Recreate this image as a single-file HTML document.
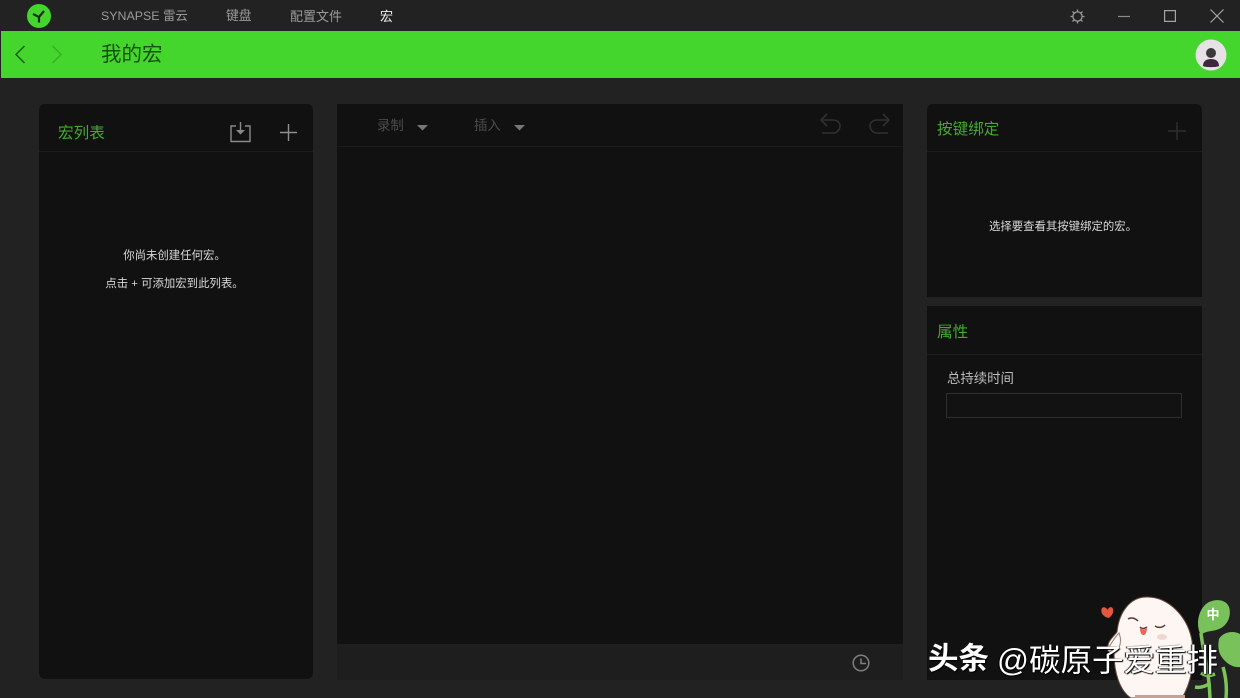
<!DOCTYPE html>
<html lang="zh"><head><meta charset="utf-8"><style>
*{box-sizing:border-box}
html,body{margin:0;padding:0;width:1240px;height:698px;overflow:hidden;background:#222}
body{position:relative;font-family:"Liberation Sans","Noto Sans CJK SC",sans-serif}
.a{position:absolute;white-space:nowrap;line-height:1}
.p{position:absolute;background:#111}
.h{color:#45a82f}
.w{color:#d8d8d8;font-size:11.400px}
svg{position:absolute;overflow:visible}
</style></head><body>
<div class="a" style="left:0;top:0;width:1240px;height:31px;background:#222"></div>
<div class="a" style="left:1px;top:31px;width:1239px;height:47px;background:#44d62c"></div>
<svg style="left:26px;top:3px" width="26" height="26" viewBox="0 0 26 26"><circle cx="13" cy="13" r="12" fill="#44d62c"/><path d="M13 14V19.500M13 14L7 11M13 14L18 8" stroke="#1b2a18" stroke-width="2.200" fill="none"/></svg>
<div class="a" style="left:101px;top:10px;font-size:12.400px;color:#9a9a9a">SYNAPSE 雷云</div>
<div class="a" style="left:226px;top:10px;font-size:12.800px;color:#9a9a9a">键盘</div>
<div class="a" style="left:290px;top:10px;font-size:13px;color:#9a9a9a">配置文件</div>
<div class="a" style="left:380px;top:10px;font-size:13px;color:#eee">宏</div>
<svg style="left:1070px;top:9px" width="15" height="15" viewBox="0 0 15 15" fill="none" stroke="#999" stroke-width="1.300"><circle cx="7.500" cy="7.500" r="4.600"/><path d="M7.500 0.500v2.400M7.500 12.100v2.400M.5 7.500h2.400M12.100 7.500h2.400M2.500 2.500l1.700 1.700M10.800 10.800l1.700 1.700M12.500 2.500l-1.700 1.700M4.200 10.800l-1.700 1.700"/></svg>
<svg style="left:1118px;top:15px" width="12" height="3"><path d="M0 1.500h12" stroke="#8a8a8a" stroke-width="1.200"/></svg>
<svg style="left:1164px;top:10px" width="12" height="12" fill="none"><rect x=".6" y=".6" width="10.800" height="10.800" stroke="#a5a5a5" stroke-width="1.200"/></svg>
<svg style="left:1210px;top:9px" width="14" height="14" fill="none"><path d="M.5.5l13 13M13.500.5l-13 13" stroke="#aaa" stroke-width="1.100"/></svg>
<svg style="left:14px;top:45px" width="12" height="19" fill="none"><path d="M10.500 1L2 9.500 10.500 18" stroke="#1b6012" stroke-width="1.500"/></svg>
<svg style="left:51px;top:45px" width="12" height="19" fill="none"><path d="M1.500 1L10 9.500 1.500 18" stroke="#39b025" stroke-width="1.500"/></svg>
<div class="a" style="left:101px;top:45px;font-size:20.500px;color:#16500e">我的宏</div>
<svg style="left:1195px;top:39px" width="32" height="32" viewBox="0 0 32 32"><circle cx="16" cy="16" r="15.500" fill="#e6e2e6"/><circle cx="16" cy="14" r="5" fill="#3a3a3a"/><path d="M8 27c0-5 3.500-7 8-7s8 2 8 7c-2 1.500-14 1.500-16 0z" fill="#3a2a3a"/></svg>

<div class="p" style="left:39px;top:104px;width:274px;height:575px;border-radius:6px"></div>
<div class="a" style="left:39px;top:151px;width:274px;height:1px;background:#1c1c1c"></div>
<div class="a h" style="left:58px;top:126px;font-size:15.600px">宏列表</div>
<svg style="left:230px;top:121px" width="21" height="22" fill="none" stroke="#8a8a8a" stroke-width="1.400"><path d="M6 5H1v15.500h19V5h-5"/><path d="M10.500 1v11" /><path d="M6 9l4.500 4.500L15 9z" fill="#8a8a8a" stroke="none"/></svg>
<svg style="left:279px;top:123px" width="19" height="19"><path d="M9.500 1v17M1 9.500h17" stroke="#8f8f8f" stroke-width="1.400"/></svg>
<div class="a w" style="left:39px;top:251px;width:271px;text-align:center">你尚未创建任何宏。</div>
<div class="a w" style="left:39px;top:279px;width:271px;text-align:center">点击 + 可添加宏到此列表。</div>

<div class="p" style="left:337px;top:104px;width:566px;height:540px"></div>
<div class="a" style="left:337px;top:146px;width:566px;height:1px;background:#1b1b1b"></div>
<div class="a" style="left:337px;top:644px;width:566px;height:36px;background:#1e1e1e"></div>
<div class="a" style="left:377px;top:119px;font-size:13.400px;color:#4c4c4c">录制</div>
<div class="a" style="left:474px;top:119px;font-size:13.400px;color:#4c4c4c">插入</div>
<svg style="left:416px;top:124px" width="13" height="7"><path d="M1 1h11L6.500 6.500z" fill="#777"/></svg>
<svg style="left:513px;top:124px" width="13" height="7"><path d="M1 1h11L6.500 6.500z" fill="#777"/></svg>
<svg style="left:819px;top:113px" width="23" height="22" fill="none" stroke="#303030" stroke-width="1.600"><path d="M8 1L2 7l6 6M2 7h12c4 0 7 2.500 7 6s-3 7-7 7H3"/></svg>
<svg style="left:868px;top:113px" width="23" height="22" fill="none" stroke="#303030" stroke-width="1.600"><path d="M15 1l6 6-6 6M21 7H9c-4 0-7 2.500-7 6s3 7 7 7h11"/></svg>
<svg style="left:852px;top:654px" width="18" height="18" fill="none" stroke="#808080" stroke-width="1.500"><circle cx="9" cy="9" r="7.800"/><path d="M9 4.500V9.500H14"/></svg>

<div class="p" style="left:927px;top:104px;width:275px;height:193px;border-radius:6px 6px 0 0"></div>
<div class="a" style="left:927px;top:151px;width:275px;height:1px;background:#1c1c1c"></div>
<div class="a h" style="left:937px;top:122px;font-size:15.600px">按键绑定</div>
<svg style="left:1168px;top:122px" width="18" height="18"><path d="M9 0v18M0 9h18" stroke="#2e2e2e" stroke-width="1.500"/></svg>
<div class="a w" style="left:927px;top:222px;width:272px;text-align:center">选择要查看其按键绑定的宏。</div>

<div class="p" style="left:927px;top:306px;width:275px;height:374px"></div>
<div class="a" style="left:927px;top:354px;width:275px;height:1px;background:#1c1c1c"></div>
<div class="a h" style="left:937px;top:325px;font-size:15.600px">属性</div>
<div class="a" style="left:947px;top:372px;font-size:13.400px;color:#bdbdbd">总持续时间</div>
<div class="a" style="left:946px;top:393px;width:236px;height:25px;border:1px solid #2e2e2e;background:#121212"></div>

<svg style="left:1095px;top:595px" width="145" height="103" viewBox="0 0 145 103">
<path d="M12.500 15c-1-3-5-4-6-1-1 4 2 8 7 9 4-2 6-7 4-10-2-2-4 0-5 2z" fill="#e2573f"/>
<path d="M106 38c2 20 8 34 9 65M128 72c3 10 4 20 3 31M106 78c5 3 9 3 14 1M100 92c5 1 9 0 14-3" stroke="#7cc45a" stroke-width="3.500" fill="none"/>
<path d="M106 40c-5-8-4-23 5-31 8-6 20-5 23 3 3 9-2 19-10 22-7 3-12 1-18 6z" fill="#79c25b"/>
<path d="M124 44c4-7 14-9 21-5v33c-8 1-16-5-20-13-2-5-2-10-1-15z" fill="#79c25b"/>
<path d="M36 103C25 96 19 78 19 58c-5 0-8-2-6-7 0-5 6-10 9-14C24 17 35 2 52 2c22 0 41 20 45 44 3 22-1 42-10 57z" fill="#fdf6f2" stroke="#6a4a42" stroke-width="1"/>
<path d="M14 52c3-5 6-10 10-14 2 5 2 10 0 15-2 3-6 3-10-1z" fill="#fdf6f2" stroke="#9a7a70" stroke-width="1"/>
<path d="M33 24c3-2 7-1 10 2M60 31c3 2 7 2 10-1M45 32c2 2 4 2 7 0" stroke="#5b3a33" stroke-width="1.500" fill="none"/>
<path d="M45 33c3 2 6 2 7-1 0 4-1 8-3.500 8S45 37 45 33z" fill="#e8665c"/>
<ellipse cx="67" cy="42" rx="5" ry="3" fill="#f0d8d2"/>
<rect x="40" y="100" width="50" height="3" fill="#c9a095"/>
<text x="118" y="24" font-size="13" font-weight="700" fill="#fff" text-anchor="middle" font-family="Noto Sans CJK SC">中</text>
</svg>
<div class="a" style="left:928px;top:644px;font-size:30.500px;font-weight:700;color:#fff;text-shadow:1px 1px 1px #000">头条</div>
<div class="a" style="left:997px;top:645px;font-size:31.500px;color:#fff;text-shadow:1px 1px 1px #000,-1px 0 1px #000">@碳原子爱重排</div>
</body></html>
